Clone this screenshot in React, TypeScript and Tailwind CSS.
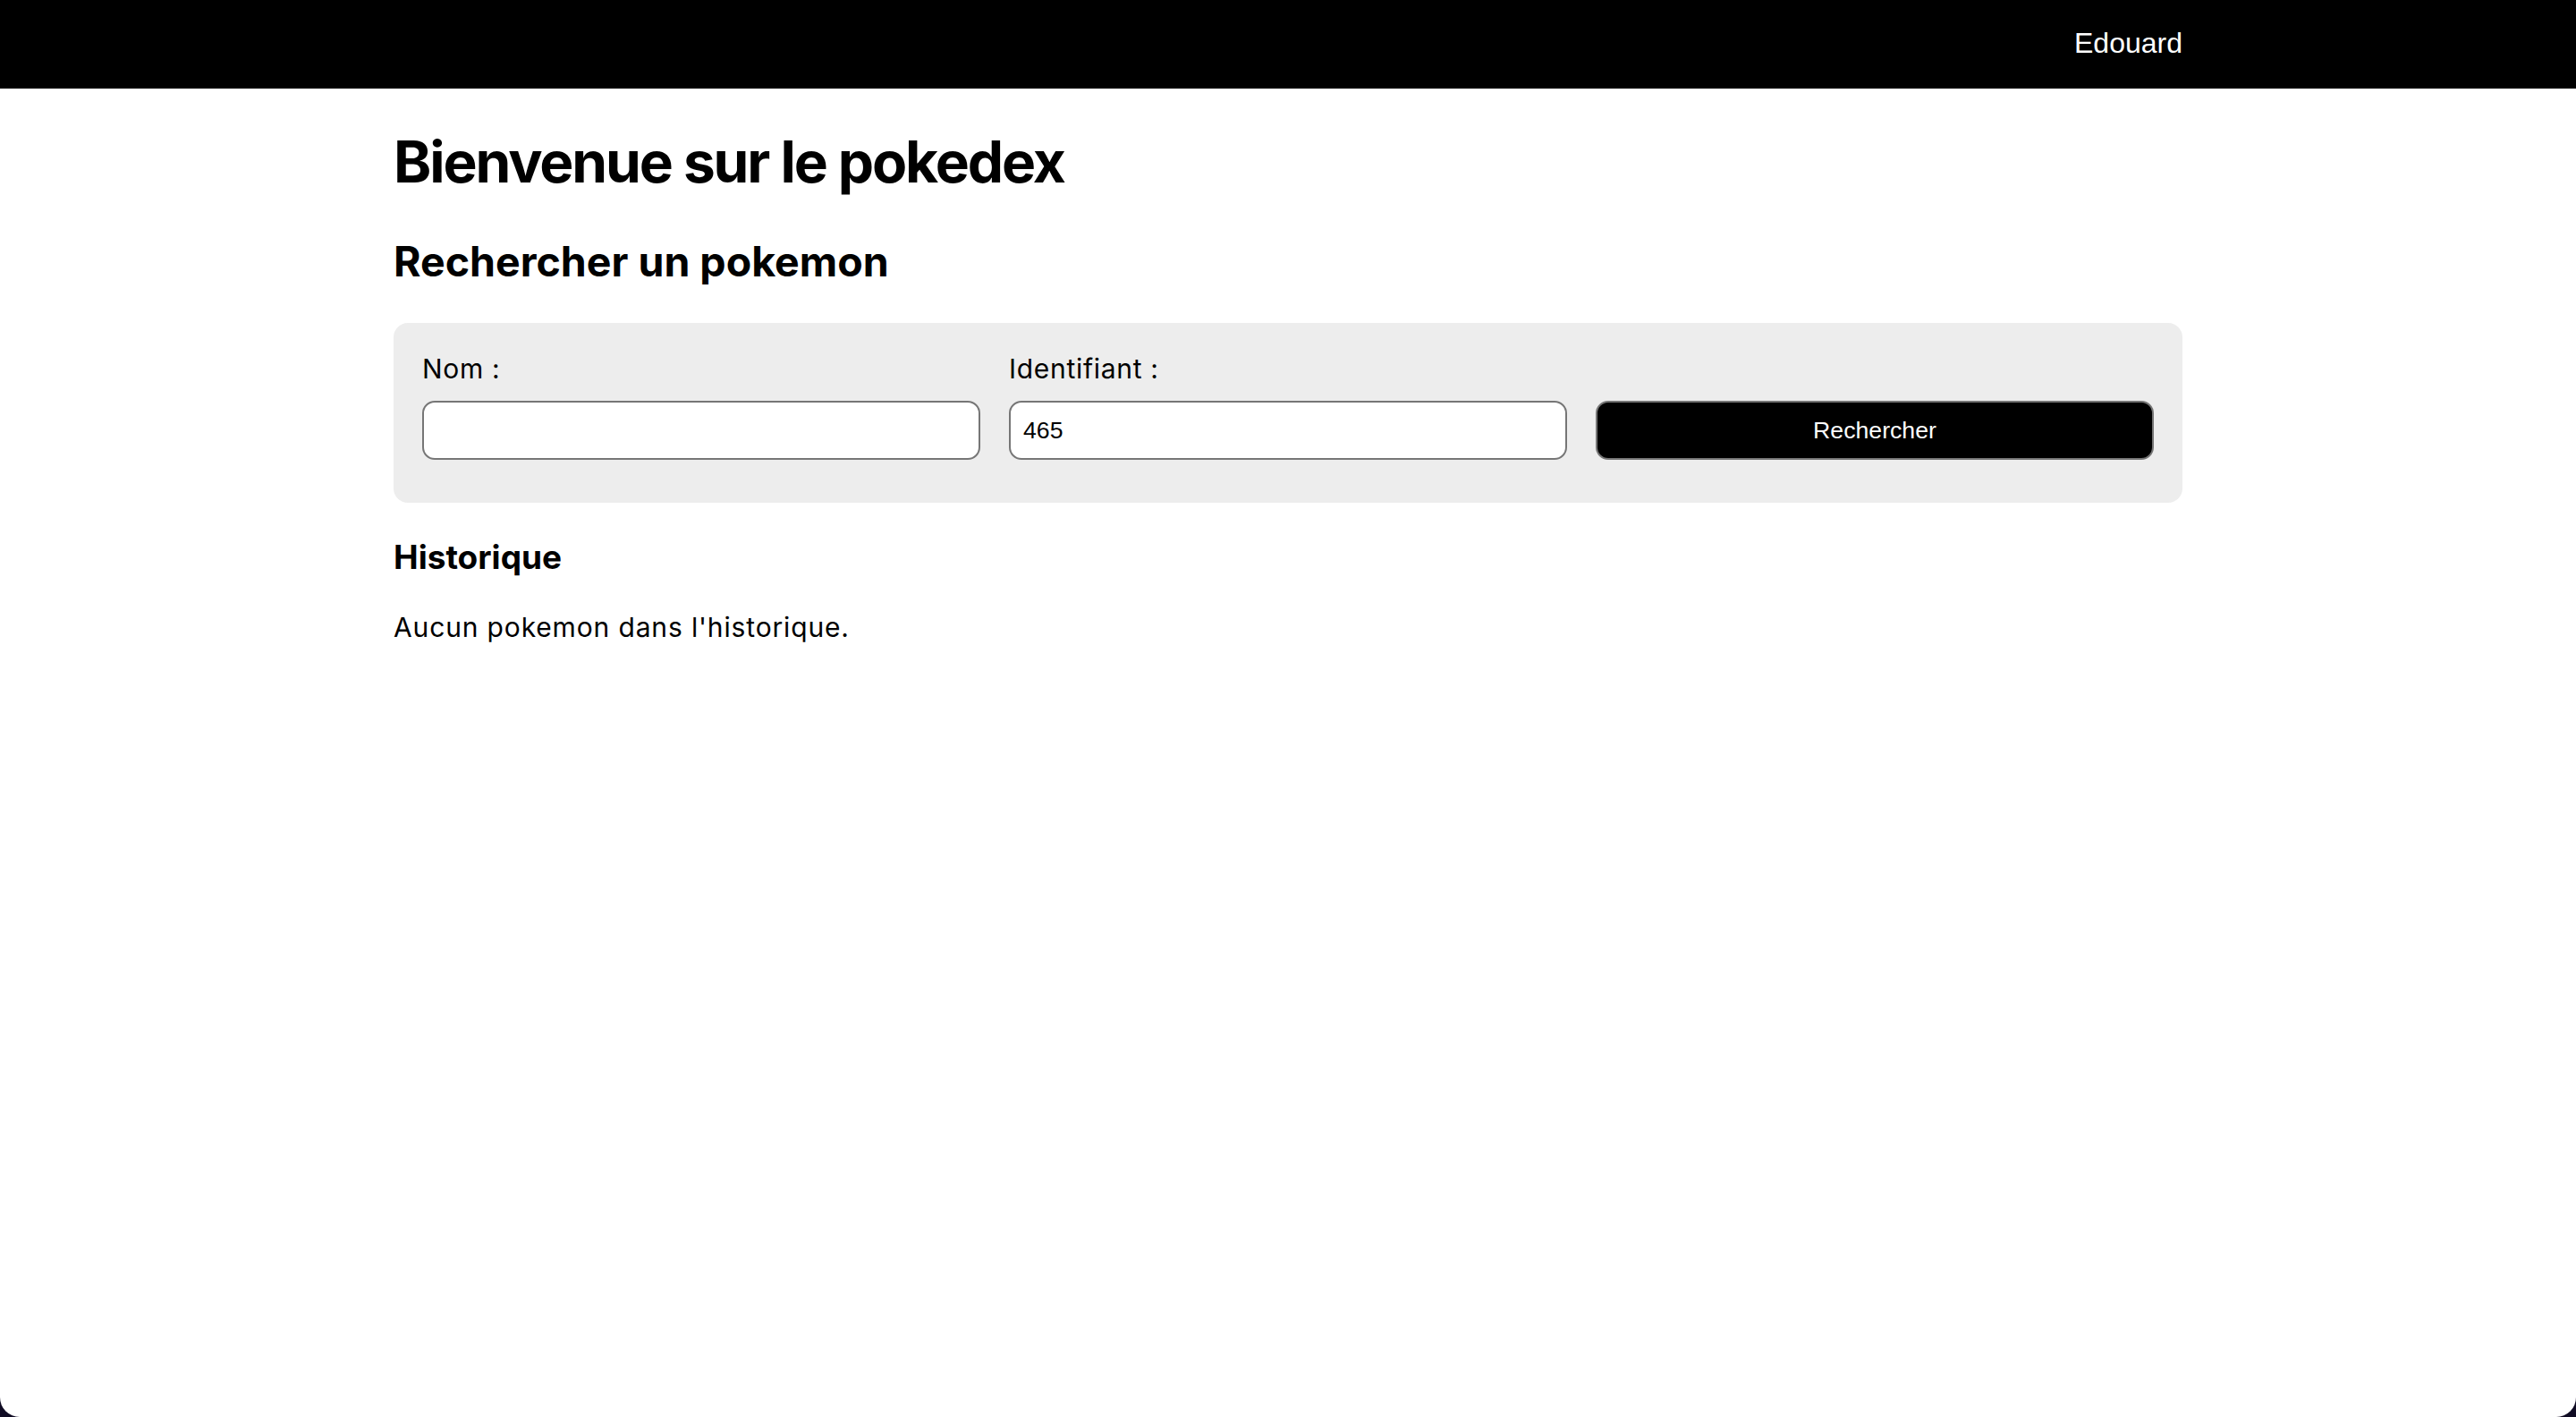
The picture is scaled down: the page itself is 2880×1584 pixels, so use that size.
const inter = "font-['Inter',sans-serif]"

const Header = () => (
  <header className="bg-black h-[99px]">
    <div className="mx-auto w-[2000px] h-full flex items-center justify-end">
      <span className="font-['Liberation_Sans',Arial,sans-serif] text-[32px] text-white pb-[3px]">
        Edouard
      </span>
    </div>
  </header>
)

const Field = ({ label, value }: { label: string; value?: string }) => (
  <div className="flex flex-col">
    <label className="text-[30px] leading-[36px] tracking-[0.7px] text-black mb-[18px]">{label}</label>
    <input
      type="text"
      defaultValue={value}
      className="h-[66px] rounded-[14px] border-2 border-[#767676] bg-white px-[14px] font-['Liberation_Sans',Arial,sans-serif] text-[26.67px] text-black outline-none"
    />
  </div>
)

export default function App() {
  return (
    <div className="bg-[#100c24] h-[1584px]">
      <div className={`bg-white h-full rounded-b-[22px] overflow-hidden ${inter}`}>
        <Header />

        <main className="mx-auto w-[2000px] pt-[43px]">
          <h1 className="text-[64px] leading-[78px] font-bold tracking-[-2.1px] text-black">Bienvenue sur le pokedex</h1>
          <h2 className="mt-[45px] text-[46.5px] leading-[54px] font-bold text-black">Rechercher un pokemon</h2>

          <form
            className="mt-[42px] bg-[#ededed] rounded-[16px] px-[32px] pt-[33px] pb-[48px] grid grid-cols-3 gap-x-[32px] items-end"
            onSubmit={(e) => e.preventDefault()}
          >
            <Field label="Nom :" />
            <Field label="Identifiant :" value="465" />
            <button
              type="submit"
              className="h-[66px] rounded-[14px] border-2 border-[#767676] bg-black text-white font-['Liberation_Sans',Arial,sans-serif] text-[26.67px]"
            >
              Rechercher
            </button>
          </form>

          <h3 className="mt-[38px] text-[37px] leading-[45px] font-bold text-black">Historique</h3>
          <p className="mt-[38px] text-[30px] leading-[36px] tracking-[0.85px] text-black">Aucun pokemon dans l'historique.</p>
        </main>
      </div>
    </div>
  )
}
